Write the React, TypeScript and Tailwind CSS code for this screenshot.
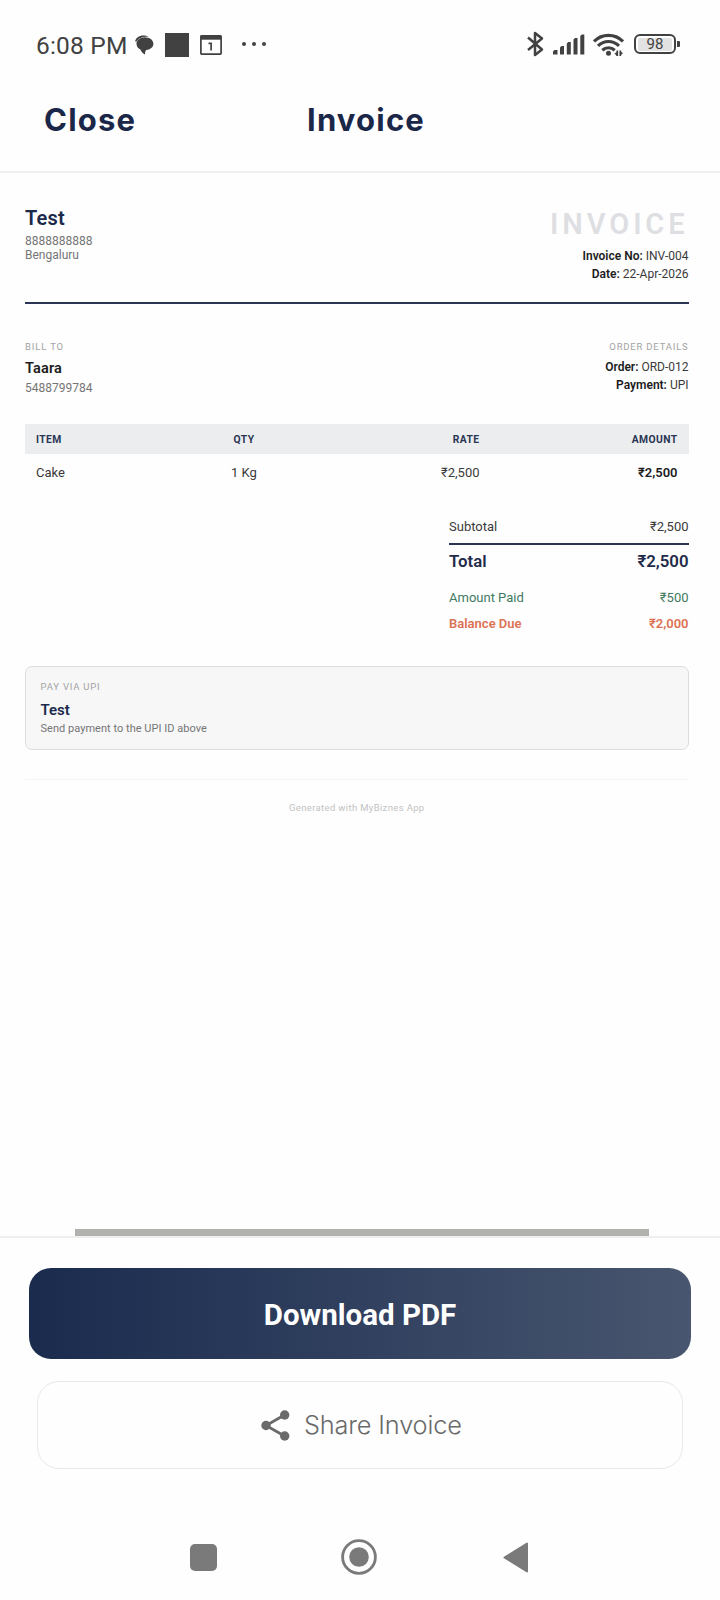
import React from "react";

function StatusBar() {
  return (
    <div className="flex h-[80px] items-start px-[36px] pt-[30px] text-[#414141]">
      <div className="flex h-[29px] w-full items-center">
        <span className="mt-[2px] w-[98px] whitespace-nowrap text-[24.500px] leading-[29px] tracking-[0.200px]">6:08 PM</span>
        <svg className="h-[20px] w-[20px]" viewBox="0 0 19 20" fill="currentColor">
          <path d="M.6 6.500C1 2.800 5 .2 9 .4c2.300 0 4.300.6 5.600 1.500C9.500 1.300 4.400 2.500 2 6.600z" />
          <path d="M10.300 2.200C15 2.200 18.900 5 18.900 8.700c0 3.400-3.300 6-7.200 6.300-.9 1-1.200 2.400-1.200 4.500-2.500-1.300-3.900-2.900-4.500-5C3.500 13.300 2 11.300 2 8.700c0-3.500 3.600-6.500 8.300-6.500z" />
        </svg>
        <div className="ml-[11px] h-[24px] w-[24px] bg-[#414141]" />
        <svg className="ml-[11px] h-[20px] w-[22px]" viewBox="0 0 22 20" fill="none" stroke="currentColor">
          <rect x="0.9" y="0.9" width="20.200" height="18.200" rx="0.800" strokeWidth="1.700" />
          <path d="M.5 2.600h21" strokeWidth="4.200" />
          <path d="M8.500 8.300h2.600v7.200" strokeWidth="1.700" />
        </svg>
        <div className="mb-[2px] ml-[20px] flex gap-[6px]">
          <i className="h-[4px] w-[4px] rounded-full bg-[#414141]" />
          <i className="h-[4px] w-[4px] rounded-full bg-[#414141]" />
          <i className="h-[4px] w-[4px] rounded-full bg-[#414141]" />
        </div>
        <svg className="mb-px ml-auto h-[26px] w-[17px]" viewBox="0 0 17 26" fill="none" stroke="currentColor" strokeWidth="2.500" strokeLinejoin="round">
          <path d="M1 6.500L15 18.500 8 24V2l7 5.500L1 19" />
        </svg>
        <svg className="ml-[9px] h-[21px] w-[32px]" viewBox="0 0 32 21" fill="currentColor">
          <path d="M0 20.500v-3l1.500-1.500h3v4.500zM7 20.500v-7l1.500-1.500H11v8.500zM13.800 20.500V9.500L15.300 8h2.500v12.500zM20.500 20.500V5.500L22 4h2.500v16.500zM27.300 20.500V2L28.800.5h2.500v20z" />
        </svg>
        <svg className="ml-[8px] h-[24px] w-[31px]" viewBox="0 0 31 24" fill="none" stroke="currentColor" strokeWidth="3.200">
          <path d="M1 8.400C9 .3 22 .3 30 8.400M5 12.900c6-5.900 15-5.900 21 0M9.300 17.200c3.600-3.300 8.800-3.300 12.400 0" />
          <circle cx="15.500" cy="20.300" r="2.500" fill="currentColor" stroke="none" />
          <path d="M24.300 17.500V23M27.300 23v-5.500" strokeWidth="1.700" />
          <path d="M21.500 20.500l2.500-1.500v4zM30 20.500L27.500 18v4z" fill="currentColor" stroke="none" />
        </svg>
        <div className="mb-px ml-[10px] flex h-[20px] w-[42px] items-center justify-center rounded-[6px] border-2 border-[#414141] p-[2px]">
          <span className="flex h-[13px] w-full items-center justify-center rounded-[2px] bg-[#e2e2e2] pt-px text-[15px] leading-[13px]">98</span>
        </div>
        <div className="mb-px ml-px mr-[4px] h-[6px] w-[3px] rounded-r-[1px] bg-[#414141]" />
      </div>
    </div>
  );
}

function Meta({ label, value }: { label: string; value: string }) {
  return (
    <div className="text-right text-[#3a3a3a]">
      <b className="font-semibold text-[#1c1c1c]">{label}</b> {value}
    </div>
  );
}

function Invoice() {
  return (
    <main className="flex h-[1063px] flex-col pl-[25px] pr-[31.500px] pt-[33px]">
      <section className="flex h-[98px] justify-between border-b-2 border-[#2a3553]">
        <div>
          <h2 className="text-[20px] font-semibold leading-[24px] tracking-[0.200px] text-[#1b2a4a]">Test</h2>
          <div className="mt-[4px] text-[12px] leading-[14px] text-[#757575]">
            <p>8888888888</p>
            <p>Bengaluru</p>
          </div>
        </div>
        <div>
          <h1 className="text-right text-[29px] font-semibold leading-[36px] tracking-[3.900px] text-[#dedfe3]">INVOICE</h1>
          <div className="mt-[6px] text-[12px] leading-[17.500px]">
            <Meta label="Invoice No:" value="INV-004" />
            <Meta label="Date:" value="22-Apr-2026" />
          </div>
        </div>
      </section>

      <section className="mt-[37px] flex h-[83px] justify-between">
        <div>
          <p className="text-[9.500px] leading-[12px] tracking-[0.850px] text-[#a3a3a3]">BILL TO</p>
          <p className="mt-[7px] text-[14.500px] font-semibold leading-[18px] tracking-[0.150px] text-[#1c1c1c]">Taara</p>
          <p className="mt-[3px] text-[12px] leading-[14px] text-[#757575]">5488799784</p>
        </div>
        <div>
          <p className="text-right text-[9.500px] leading-[12px] tracking-[0.800px] text-[#a3a3a3]">ORDER DETAILS</p>
          <div className="mt-[5px] text-[12px] leading-[18px]">
            <Meta label="Order:" value="ORD-012" />
            <Meta label="Payment:" value="UPI" />
          </div>
        </div>
      </section>

      <table className="w-full table-fixed border-collapse">
        <thead>
          <tr className="h-[30px] bg-[#ecedef] text-[10.300px] leading-[28px] tracking-[0.400px] text-[#2a3553]">
            <th className="w-[171px] pb-0 pl-[11px] pt-[2px] text-left font-bold">ITEM</th>
            <th className="w-[96px] pb-0 pt-[2px] text-center font-bold">QTY</th>
            <th className="w-[187.500px] pb-0 pt-[2px] text-right font-bold">RATE</th>
            <th className="pb-0 pr-[11px] pt-[2px] text-right font-bold">AMOUNT</th>
          </tr>
        </thead>
        <tbody>
          <tr className="h-[37px] text-[13px] leading-[37px] text-[#3a3a3a]">
            <td className="pl-[11px]">Cake</td>
            <td className="text-center">1 Kg</td>
            <td className="text-right">₹2,500</td>
            <td className="pr-[11px] text-right font-semibold text-[#1c1c1c]">₹2,500</td>
          </tr>
        </tbody>
      </table>

      <section className="ml-auto mt-[27px] w-[239.500px] text-[13px] leading-[18px]">
        <div className="flex h-[25px] justify-between text-[#3a3a3a]">
          <span>Subtotal</span>
          <span>₹2,500</span>
        </div>
        <div className="flex h-[46px] justify-between border-t-2 border-[#2a3553] pt-[6px] text-[16.800px] font-semibold leading-[20px] text-[#1f2b49]">
          <span>Total</span>
          <span>₹2,500</span>
        </div>
        <div className="flex h-[26px] justify-between text-[#427a62]">
          <span>Amount Paid</span>
          <span>₹500</span>
        </div>
        <div className="flex justify-between font-semibold text-[#dc7254]">
          <span>Balance Due</span>
          <span>₹2,000</span>
        </div>
      </section>

      <section className="mt-[33px] h-[84px] rounded-[7px] border border-[#dcdddf] bg-[#f7f7f8] pl-[14.500px] pt-[14px]">
        <p className="text-[9.500px] leading-[12px] tracking-[0.800px] text-[#a3a3a3]">PAY VIA UPI</p>
        <p className="mt-[8px] text-[15px] font-semibold leading-[18px] text-[#1b2a4a]">Test</p>
        <p className="mt-[3px] text-[11px] leading-[14px] tracking-[0.030px] text-[#757575]">Send payment to the UPI ID above</p>
      </section>

      <footer className="mt-[29px] border-t border-[#f3f3f3] pt-[22px] text-center text-[9.500px] leading-[12px] tracking-[0.350px] text-[#c2c2c2]">
        Generated with MyBiznes App
      </footer>
      <div className="ml-[50px] mt-auto h-[7px] w-[574px] shrink-0 bg-[#b1b1ae]" />
    </main>
  );
}

export default function App() {
  return (
    <div className="flex h-[1600px] w-[720px] flex-col bg-[#fefefe] font-['Roboto','Noto_Sans',sans-serif]">
      <StatusBar />
      <header className="grid h-[93px] grid-cols-3 border-b-2 border-[#f0f0f0] font-['Inter',sans-serif] text-[31px] font-[650] leading-[79px] tracking-[1.200px] text-[#1b2748]">
        <span className="pl-[44px]">Close</span>
        <span className="pl-[67px]">Invoice</span>
      </header>
      <Invoice />
      <section className="flex h-[364px] flex-col border-t-2 border-[#efefed]">
        <button className="ml-[29px] mt-[30px] h-[91px] w-[662px] rounded-[22px] bg-linear-to-r from-[#1b2b4e] to-[#48566f] pt-[3px] text-[29.500px] font-bold text-white">
          Download PDF
        </button>
        <button className="ml-[37px] mt-[22px] flex h-[88px] w-[646px] items-center rounded-[22px] border border-[#e9e9e7] pl-[223px] text-[#6a6a6a]">
          <svg className="h-[31px] w-[29px]" viewBox="0 0 29 31" fill="currentColor">
            <path d="M23.500 5L5 15.500l18.500 10.500" fill="none" stroke="currentColor" strokeWidth="2.800" />
            <circle cx="23.700" cy="5" r="4.700" />
            <circle cx="5" cy="15.500" r="4.700" />
            <circle cx="23.700" cy="26" r="4.700" />
          </svg>
          <span className="ml-[14px] font-['Inter',sans-serif] text-[25.300px] font-[350] leading-[32px] tracking-[-0.150px]">Share Invoice</span>
        </button>
        <nav className="mt-[70px] flex h-[36px] items-center text-[#7a7a7a]">
          <div className="ml-[190px] h-[27px] w-[27px] rounded-[5px] bg-[#7a7a7a]" />
          <svg className="ml-[124px] h-[36px] w-[36px]" viewBox="0 0 36 36">
            <circle cx="18" cy="18" r="16.400" fill="none" stroke="currentColor" strokeWidth="2.800" />
            <circle cx="18" cy="18" r="9.800" fill="currentColor" />
          </svg>
          <svg className="ml-[126px] h-[31px] w-[25px]" viewBox="0 0 25 31">
            <path d="M1.500 15.500L24 1.500v28z" fill="currentColor" stroke="currentColor" strokeWidth="2" strokeLinejoin="round" />
          </svg>
        </nav>
      </section>
    </div>
  );
}
